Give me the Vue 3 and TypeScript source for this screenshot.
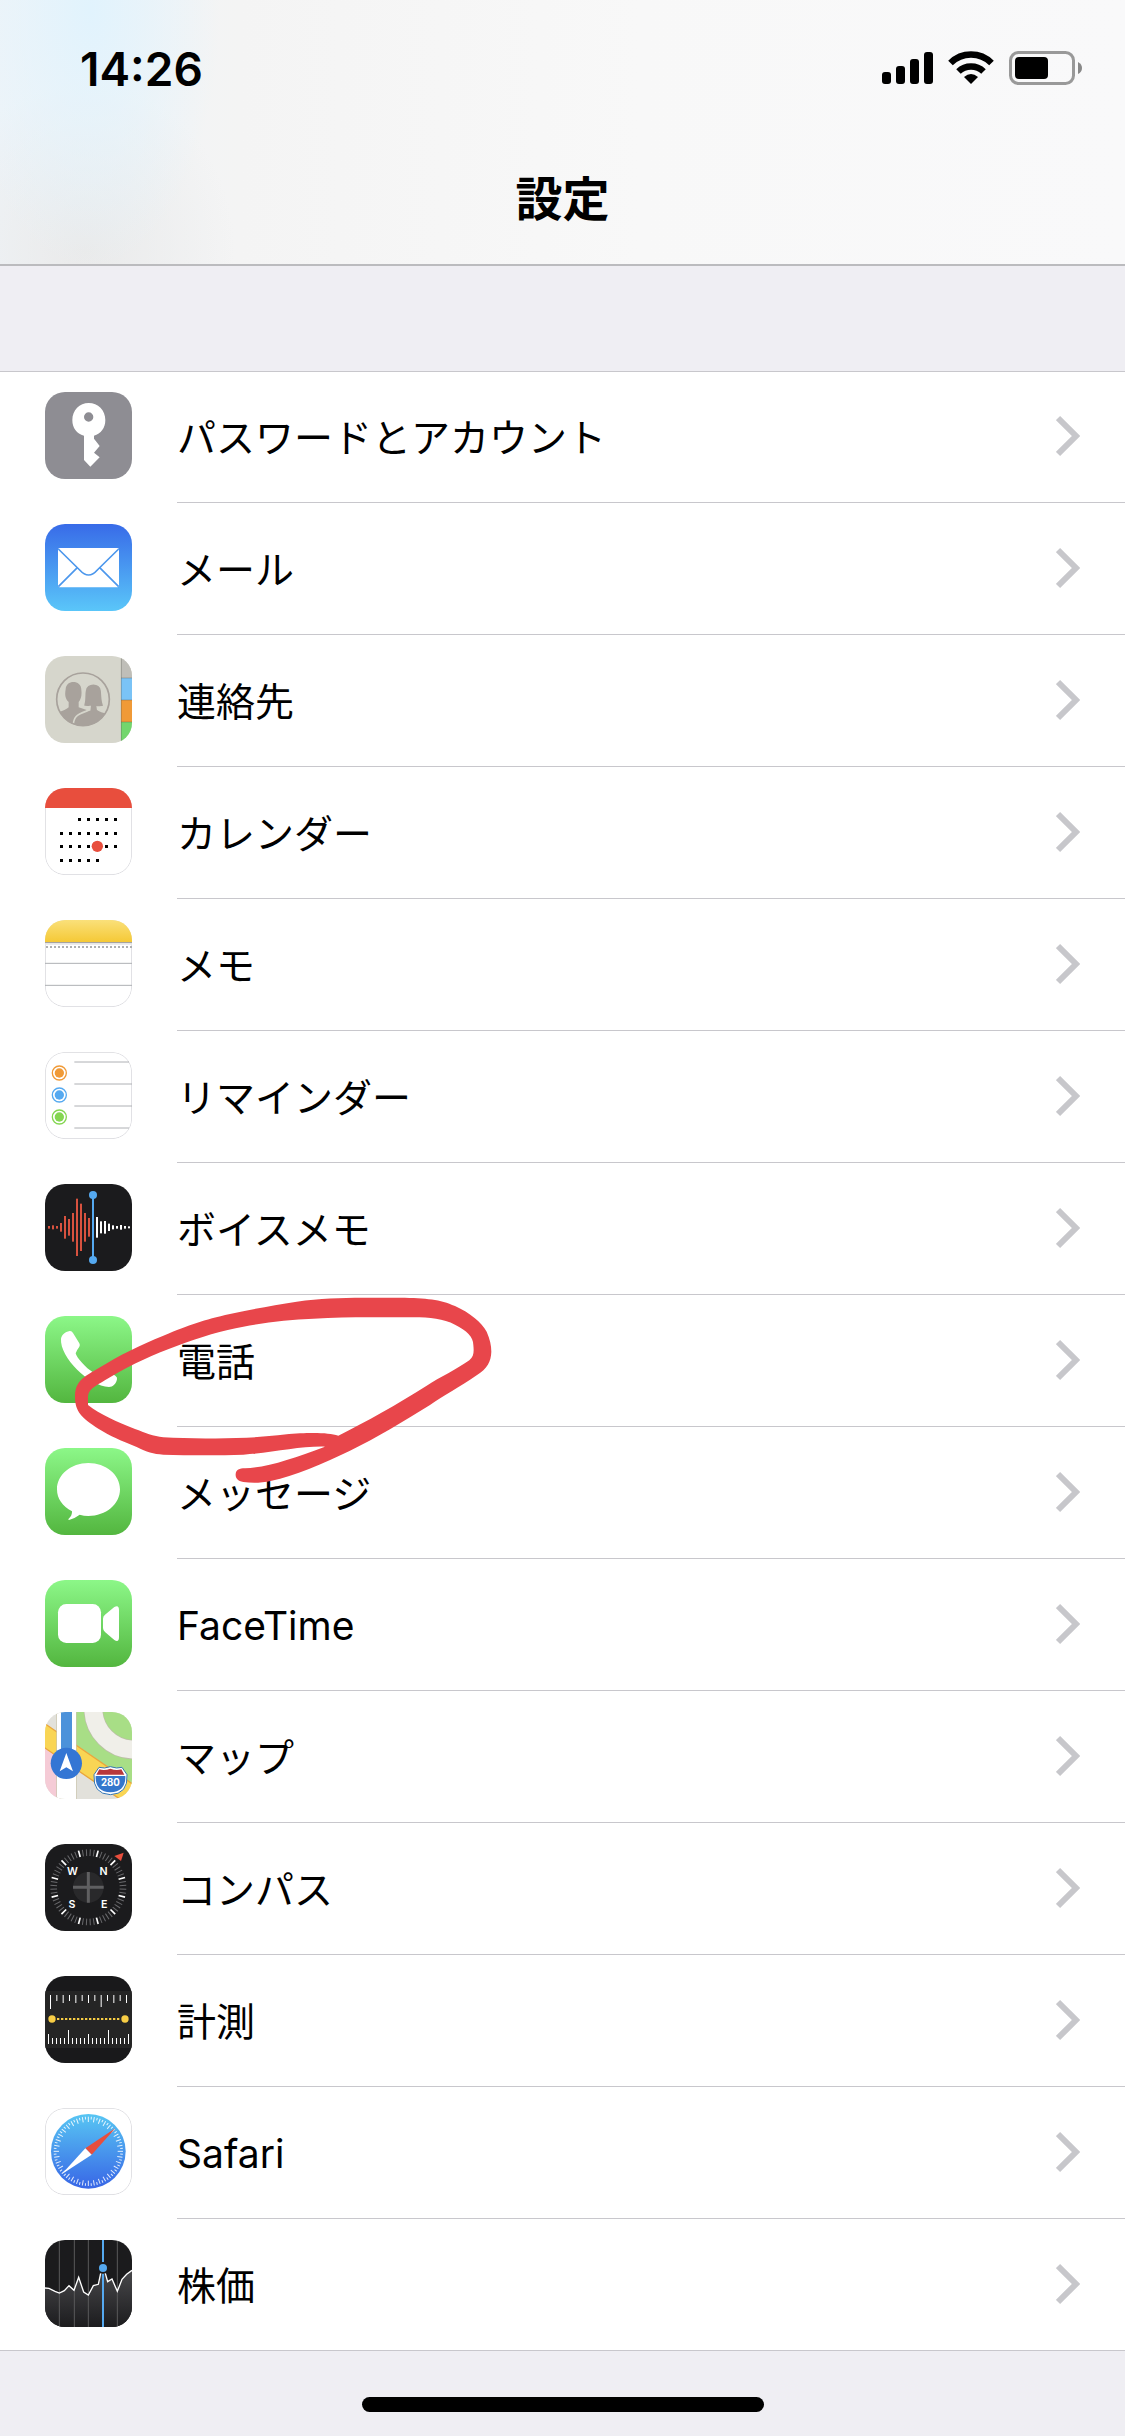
<script setup lang="ts">
interface Item {
  id: string
  label: string
}

interface Bar {
  x: number
  h: number
}

const items: Item[] = [
  { id: 'key', label: 'パスワードとアカウント' },
  { id: 'mail', label: 'メール' },
  { id: 'contacts', label: '連絡先' },
  { id: 'calendar', label: 'カレンダー' },
  { id: 'notes', label: 'メモ' },
  { id: 'reminders', label: 'リマインダー' },
  { id: 'voice', label: 'ボイスメモ' },
  { id: 'phone', label: '電話' },
  { id: 'messages', label: 'メッセージ' },
  { id: 'facetime', label: 'FaceTime' },
  { id: 'maps', label: 'マップ' },
  { id: 'compass', label: 'コンパス' },
  { id: 'measure', label: '計測' },
  { id: 'safari', label: 'Safari' },
  { id: 'stocks', label: '株価' },
]

const calendarRows = [
  { y: 94, from: 2, to: 6 },
  { y: 136, from: 0, to: 6 },
  { y: 175, from: 0, to: 6 },
  { y: 217, from: 0, to: 4 },
]
const calendarDots = calendarRows.flatMap((r) =>
  Array.from({ length: r.to - r.from + 1 }, (_, i) => ({ x: 49 + (r.from + i) * 27, y: r.y })),
)

const reminderDots = [
  { y: 63, color: '#f09a37' },
  { y: 129, color: '#55a9f0' },
  { y: 195, color: '#84d651' },
]

const redWave: Bar[] = [4, 6, 4, 13, 34, 25, 43, 86, 71, 43, 28].map((h, i) => ({ x: 12 + i * 12, h }))
const whiteWave: Bar[] = [31, 18, 19, 11, 6, 4, 7, 4, 3].map((h, i) => ({ x: 156 + i * 12, h }))

const compassTicks = Array.from({ length: 60 }, (_, i) => ({ angle: i * 6 + 15, major: i % 5 === 0 }))

const rulerTop: Bar[] = [42, 18, 24, 18, 24, 18, 24, 18, 36, 18, 24, 18, 24].map((h, i) => ({
  x: 16 + i * 19,
  h,
}))
const rulerBottom: Bar[] = Array.from({ length: 21 }, (_, i) => ({
  x: 10 + i * 12,
  h: i % 10 === 5 ? 42 : i % 5 === 0 ? 30 : 18,
}))

const safariTicks = Array.from({ length: 72 }, (_, i) => ({ angle: i * 5, inner: i % 2 === 0 ? 42 : 34 }))
</script>

<template>
  <div class="screen">
    <header class="top">
      <div class="status">
        <span class="time">14:26</span>
        <svg class="indicators" viewBox="0 0 201 36" aria-hidden="true">
          <rect x="0" y="21" width="9" height="12" rx="3" />
          <rect x="14" y="15" width="9" height="18" rx="3" />
          <rect x="28" y="8" width="9" height="25" rx="3" />
          <rect x="42" y="1" width="9" height="32" rx="3" />
          <path d="M89 33 L82 26 Q89 20 96 26 Z" />
          <path d="M76.500 20.500 A18 18 0 0 1 101.500 20.500" fill="none" stroke="#000" stroke-width="6.500" />
          <path d="M68.500 12 A29 29 0 0 1 109.500 12" fill="none" stroke="#000" stroke-width="6.500" />
          <rect x="128.500" y="1.500" width="63" height="31" rx="8" fill="none" stroke="#999" stroke-width="3" />
          <rect x="133" y="6" width="33" height="22" rx="4" />
          <path d="M196 11 Q200 13 200 17 Q200 21 196 23 Z" fill="#888" />
        </svg>
      </div>
      <h1 class="title">設定</h1>
    </header>

    <main>
      <ul class="list">
        <li v-for="item in items" :key="item.id" class="item">
          <a class="row" href="#">
            <svg class="icon" viewBox="0 0 261 261" aria-hidden="true">
              <template v-if="item.id === 'key'">
                <rect width="261" height="261" fill="#8e8d93" />
                <path
                  fill="#fff"
                  fill-rule="evenodd"
                  d="M131 33 C159 33 181 55 181 84 C181 108 168 125 147 131 V140 L164 162 L147 182 L164 196 L136 224 L117 204 V131 C95 125 82 108 82 84 C82 55 104 33 131 33 Z M131 61 A14 14 0 1 0 131 89 A14 14 0 1 0 131 61 Z"
                />
              </template>

              <template v-else-if="item.id === 'mail'">
                <defs>
                  <linearGradient id="mail-bg" x1="0" y1="0" x2="0" y2="1">
                    <stop offset="0" stop-color="#386be8" />
                    <stop offset="1" stop-color="#5ac6f9" />
                  </linearGradient>
                </defs>
                <rect width="261" height="261" fill="url(#mail-bg)" />
                <rect x="39" y="72" width="183" height="118" rx="5" fill="#fff" />
                <g fill="none" stroke="#4c97ec" stroke-width="5">
                  <path d="M40 75 L104 138 Q131 168 157 138 L221 75" />
                  <path d="M97 131 L40 188 M164 131 L221 188" />
                </g>
              </template>

              <template v-else-if="item.id === 'contacts'">
                <rect width="261" height="261" fill="#d6d6cc" />
                <rect x="228" width="33" height="66" fill="#bfbeb8" />
                <rect x="228" y="66" width="33" height="66" fill="#7ac3f6" />
                <rect x="228" y="132" width="33" height="66" fill="#f09a37" />
                <rect x="228" y="198" width="33" height="63" fill="#73d66d" />
                <path d="M229 0 V261 M228 66 H261 M228 132 H261 M228 198 H261" stroke="#5a5a50" stroke-opacity=".35" stroke-width="3" />
                <defs>
                  <clipPath id="contacts-clip"><circle cx="114" cy="130" r="80" /></clipPath>
                </defs>
                <g clip-path="url(#contacts-clip)" fill="#a8a29c">
                  <path d="M30 172 Q64 162 71 154 V138 C58 126 60 112 62 100 C62 70 110 70 109 102 C111 118 108 130 101 138 V154 L125 162 V220 H30 Z" />
                  <path
                    stroke="#d6d6cc"
                    stroke-width="5"
                    d="M84 225 C82 176 100 174 134 162 L135 152 Q121 154 114 150 C121 134 117 118 120 104 C122 76 168 76 170 104 C172 122 170 136 178 151 Q170 154 157 153 L158 160 Q164 166 200 174 V225 Z"
                  />
                </g>
                <circle cx="114" cy="130" r="79" fill="none" stroke="#a8a29c" stroke-width="5" />
              </template>

              <template v-else-if="item.id === 'calendar'">
                <rect width="261" height="261" fill="#fff" />
                <rect class="edge" x="1" y="1" width="259" height="259" rx="59" />
                <rect width="261" height="60" fill="#e84e3d" />
                <rect v-for="(dot, i) in calendarDots" :key="i" :x="dot.x - 4" :y="dot.y - 4" width="9" height="9" />
                <circle cx="157" cy="175" r="17" fill="#e84e3d" />
              </template>

              <template v-else-if="item.id === 'notes'">
                <defs>
                  <linearGradient id="notes-bg" x1="0" y1="0" x2="0" y2="1">
                    <stop offset="0" stop-color="#fae07a" />
                    <stop offset="1" stop-color="#f5c936" />
                  </linearGradient>
                </defs>
                <rect width="261" height="261" fill="#fff" />
                <rect class="edge" x="1" y="1" width="259" height="259" rx="59" />
                <rect width="261" height="66" fill="url(#notes-bg)" />
                <path d="M0 68 H261" stroke="#a5a3a0" stroke-width="4" />
                <path d="M0 72 H261" stroke="#e6e6e6" stroke-width="4" />
                <path d="M3 81 H261" stroke="#aeb0b2" stroke-width="6" stroke-dasharray="6 6" />
                <path d="M0 130 H261 M0 196 H261" stroke="#aeb0b4" stroke-width="3" />
              </template>

              <template v-else-if="item.id === 'reminders'">
                <rect width="261" height="261" fill="#fff" />
                <rect class="edge" x="1" y="1" width="259" height="259" rx="59" />
                <path d="M88 30 H252 M88 96 H261 M88 162 H261 M88 228 H252" stroke="#aeb0b4" stroke-width="3" />
                <g v-for="dot in reminderDots" :key="dot.y">
                  <circle cx="43" :cy="dot.y" r="21" fill="none" :stroke="dot.color" stroke-width="4" />
                  <circle cx="43" :cy="dot.y" r="14" :fill="dot.color" />
                </g>
              </template>

              <template v-else-if="item.id === 'voice'">
                <rect width="261" height="261" fill="#1b1b1d" />
                <rect v-for="bar in redWave" :key="bar.x" :x="bar.x - 3" :y="130 - bar.h" width="6" :height="bar.h * 2" fill="#d8523f" />
                <rect v-for="bar in whiteWave" :key="bar.x" :x="bar.x - 3" :y="130 - bar.h" width="6" :height="bar.h * 2" fill="#fff" />
                <path d="M144 33 V228" stroke="#55a9f0" stroke-width="6" />
                <circle cx="144" cy="33" r="12" fill="#55a9f0" />
                <circle cx="144" cy="228" r="12" fill="#55a9f0" />
              </template>

              <template v-else-if="item.id === 'phone'">
                <defs>
                  <linearGradient id="green-bg" x1="0" y1="0" x2="0" y2="1">
                    <stop offset="0" stop-color="#8cf788" />
                    <stop offset="1" stop-color="#53b63f" />
                  </linearGradient>
                </defs>
                <rect width="261" height="261" fill="url(#green-bg)" />
                <path
                  fill="#fff"
                  d="M48 68 C50 56 60 48 74 45 Q80 44 84 51 L103 82 Q106 88 103 92 Q94 104 92 112 C94 124 124 158 143 168 Q152 167 164 158 Q170 154 176 157 L211 179 Q218 184 216 190 C213 204 204 213 192 213 C132 209 44 124 48 68 Z"
                />
              </template>

              <template v-else-if="item.id === 'messages'">
                <rect width="261" height="261" fill="url(#green-bg)" />
                <path
                  fill="#fff"
                  d="M130 45 C183 45 225 80 225 124 C225 169 183 204 130 204 Q117 204 104 200 Q88 212 72 216 Q68 215 71 212 Q82 203 81 190 C52 175 36 152 36 124 C36 80 78 45 130 45 Z"
                />
              </template>

              <template v-else-if="item.id === 'facetime'">
                <rect width="261" height="261" fill="url(#green-bg)" />
                <rect x="39" y="72" width="129" height="117" rx="25" fill="#fff" />
                <path fill="#fff" d="M174 116 Q174 109 180 104 L208 81 Q222 73 222 90 V171 Q222 189 208 180 L180 156 Q174 151 174 144 Z" />
              </template>

              <template v-else-if="item.id === 'maps'">
                <rect width="261" height="261" fill="#e2e1db" />
                <path d="M93 0 H261 V215 L93 98 Z" fill="#a8de86" />
                <circle cx="268" cy="-10" r="123" fill="none" stroke="#bcbfa8" stroke-width="58" />
                <circle cx="268" cy="-10" r="123" fill="none" stroke="#f0efe9" stroke-width="54" />
                <path d="M0 104 L36 130 V261 H0 Z" fill="#f5cbd6" />
                <path d="M-6 31 L267 219 V290 L-6 104 Z" fill="#f9d554" stroke="#eaa63c" stroke-width="4" />
                <rect x="34" width="61" height="261" fill="#c9c5ae" />
                <rect x="36" width="57" height="261" fill="#fff" />
                <rect x="48" width="33" height="154" fill="#4c92da" />
                <circle cx="64" cy="154" r="47" fill="#3476d4" />
                <path d="M64 123 L84 178 L64 166 L44 178 Z" fill="#fff" />
                <path
                  d="M162 166 Q178 171 196 164 Q216 171 231 166 L246 188 Q250 246 196 248 Q143 246 147 188 Z"
                  fill="#fff"
                  stroke="#3476b4"
                  stroke-width="3"
                />
                <path d="M163 172 Q179 177 196 170 Q214 177 229 172 L238 188 H154 Z" fill="#b8383c" />
                <path d="M152 192 H241 Q243 239 196 241 Q150 239 152 192 Z" fill="#3476cc" />
                <text x="196" y="221" class="shield" text-anchor="middle">280</text>
              </template>

              <template v-else-if="item.id === 'compass'">
                <rect width="261" height="261" fill="#1b1b1d" />
                <path
                  v-for="tick in compassTicks"
                  :key="tick.angle"
                  d="M130 16 V36"
                  :transform="`rotate(${tick.angle} 130 130)`"
                  :stroke="tick.major ? '#fff' : '#6a6a6d'"
                  :stroke-width="tick.major ? 5 : 3"
                />
                <circle cx="130" cy="130" r="46" fill="#29292b" />
                <path d="M130 84 V176 M84 130 H176" stroke="#5f5f61" stroke-width="9" />
                <path d="M208 36 L236 26 L228 51 Z" fill="#e84e3d" />
                <g class="points" text-anchor="middle">
                  <text x="82" y="93">W</text>
                  <text x="176" y="93">N</text>
                  <text x="81" y="192">S</text>
                  <text x="178" y="192">E</text>
                </g>
              </template>

              <template v-else-if="item.id === 'measure'">
                <rect width="261" height="261" fill="#19191b" />
                <rect y="45" width="261" height="171" fill="#252525" />
                <rect v-for="bar in rulerTop" :key="bar.x" :x="bar.x - 1" y="57" width="3" :height="bar.h" fill="#fff" />
                <rect v-for="bar in rulerBottom" :key="bar.x" :x="bar.x - 1" :y="204 - bar.h" width="3" :height="bar.h" fill="#fff" />
                <path d="M36 129 H226" stroke="#f7cd45" stroke-width="6" stroke-dasharray="7 5" />
                <circle cx="21" cy="129" r="11" fill="#f7cd45" />
                <circle cx="240" cy="129" r="11" fill="#f7cd45" />
              </template>

              <template v-else-if="item.id === 'safari'">
                <defs>
                  <linearGradient id="safari-bg" x1="0" y1="0" x2="0" y2="1">
                    <stop offset="0" stop-color="#58c6f3" />
                    <stop offset="1" stop-color="#3866e6" />
                  </linearGradient>
                </defs>
                <rect width="261" height="261" fill="#fff" />
                <rect class="edge" x="1" y="1" width="259" height="259" rx="59" />
                <circle cx="130" cy="130" r="112" fill="url(#safari-bg)" />
                <path
                  v-for="tick in safariTicks"
                  :key="tick.angle"
                  :d="`M130 26 V${tick.inner}`"
                  :transform="`rotate(${tick.angle} 130 130)`"
                  stroke="#fff"
                  stroke-opacity=".85"
                  stroke-width="3"
                />
                <path d="M211 61 L140 140 L121 121 Z" fill="#e84e3d" />
                <path d="M50 199 L121 121 L140 140 Z" fill="#fff" />
              </template>

              <template v-else>
                <defs>
                  <linearGradient id="stocks-area" x1="0" y1="0" x2="0" y2="1">
                    <stop offset="0" stop-color="#48484b" />
                    <stop offset="1" stop-color="#1c1c1e" />
                  </linearGradient>
                </defs>
                <rect width="261" height="261" fill="#1b1b1d" />
                <path
                  fill="url(#stocks-area)"
                  d="M0 144 L12 145 L30 154 L43 159 L58 152 L72 137 L87 151 L101 112 L116 156 L130 165 L145 137 L160 133 L167 100 H181 L188 125 L201 117 L217 154 L231 118 L245 103 L261 91 V261 H0 Z"
                />
                <path d="M43 0 V261 M88 0 V261 M130 0 V261 M217 0 V261" stroke="#59595b" stroke-width="3" />
                <path
                  fill="none"
                  stroke="#fff"
                  stroke-width="4"
                  d="M0 144 L12 145 L30 154 L43 159 L58 152 L72 137 L87 151 L101 112 L116 156 L130 165 L145 137 L160 133 L167 100 M181 100 L188 125 L201 117 L217 154 L231 118 L245 103 L261 91"
                />
                <path d="M174 0 V66 M174 102 V261" stroke="#55a9f0" stroke-width="6" />
                <circle cx="174" cy="84" r="12" fill="#55a9f0" />
              </template>
            </svg>
            <span class="body">
              <span class="label">{{ item.label }}</span>
              <svg class="chevron" viewBox="0 0 24 42" aria-hidden="true">
                <path d="M2 3 L20 21 L2 39" fill="none" stroke="#c7c7cb" stroke-width="6" />
              </svg>
            </span>
          </a>
          <svg v-if="item.id === 'phone'" class="marker" viewBox="0 15 1440 600" aria-hidden="true">
            <path
              fill="#e8464b"
              fill-rule="evenodd"
              d="M135 320 C135 275 160 262 200 238 C270 194 330 166 400 137 C480 104 520 90 600 72 C670 57 730 46 800 35 C870 25 930 23 1000 23 H1110 C1190 24 1230 28 1275 48 C1320 68 1355 98 1370 125 C1380 148 1384 165 1384 185 C1383 215 1372 235 1340 256 C1290 290 1240 318 1200 345 C1120 395 1040 443 960 482 C880 521 790 559 725 572 C690 580 665 579 640 576 C622 573 616 564 617 552 C618 540 628 535 645 535 C710 533 790 505 885 470 C810 468 730 488 640 494 C560 497 470 496 400 494 C370 492 350 486 320 471 C270 450 240 438 205 416 C155 383 135 365 135 320 Z M174 318 C176 295 205 284 240 262 C310 220 370 194 440 168 C510 141 580 120 640 110 C710 97 780 88 850 86 C930 81 1010 82 1080 82 H1150 C1200 82 1240 86 1275 104 C1310 122 1330 140 1330 165 C1332 185 1332 200 1318 211 C1280 238 1230 262 1190 287 C1100 344 1010 394 925 437 C900 430 870 428 810 430 C760 433 710 441 650 443 C560 446 470 446 400 442 C370 439 345 428 315 417 C260 396 210 373 174 345 Z"
            />
          </svg>
        </li>
      </ul>
    </main>

    <footer class="bottom">
      <div class="home"></div>
    </footer>
  </div>
</template>

<style>
body {
  margin: 0;
  background: #efeef3;
}
</style>

<style scoped>
.screen {
  display: flex;
  flex-direction: column;
  min-height: 100vh;
  background: #efeef3;
  color: #000;
  font-family: Inter, 'Noto Sans CJK JP', sans-serif;
}

.top {
  height: 264px;
  border-bottom: 2px solid #bbbbbe;
  box-sizing: content-box;
  background:
    radial-gradient(ellipse 130px 260px at 90px 10px, #e1f3fd, transparent),
    radial-gradient(ellipse 150px 170px at 85px 250px, #eaeaea, transparent),
    linear-gradient(90deg, #eff4f8, #f4f4f4 240px, #f8f8f8 640px, #f9f9fa);
}

.status {
  display: flex;
  justify-content: space-between;
  align-items: center;
  height: 138px;
  padding: 0 42px 0 80px;
}

.time {
  font-size: 46px;
  font-weight: 600;
  line-height: 54px;
}

.indicators {
  width: 201px;
  height: 36px;
}

.title {
  margin: 0;
  padding-top: 25px;
  font-size: 47px;
  font-weight: 700;
  line-height: 72px;
  text-align: center;
}

.list {
  margin: 105px 0 0;
  padding: 0;
  list-style: none;
  background: #fff;
  box-shadow: inset 0 1px #c8c7cc;
}

.item {
  position: relative;
}

.row {
  display: flex;
  align-items: center;
  gap: 45px;
  height: 132px;
  padding-left: 45px;
  color: inherit;
  text-decoration: none;
}

.item:last-child {
  box-shadow: inset 0 -1px #c8c7cc;
}

.icon {
  flex: none;
  width: 87px;
  height: 87px;
  margin-bottom: 3px;
  border-radius: 20px;
}

.edge {
  fill: none;
  stroke: #dcdce0;
  stroke-width: 3px;
}

.shield {
  fill: #fff;
  font-size: 29px;
  font-weight: 700;
}

.points {
  fill: #fff;
  font-size: 32px;
  font-weight: 600;
}

.body {
  box-sizing: border-box;
  display: flex;
  flex: 1;
  align-items: center;
  justify-content: space-between;
  height: 100%;
  padding-right: 45px;
  border-bottom: 1px solid #c8c7cc;
}

.label {
  padding-top: 3px;
  font-size: 39px;
  line-height: 60px;
}

.chevron {
  width: 24px;
  height: 42px;
  margin-bottom: 2px;
}

.marker {
  position: absolute;
  z-index: 1;
  top: 0;
  left: 30px;
  width: 480px;
  height: 200px;
  pointer-events: none;
}

.bottom {
  display: flex;
  justify-content: center;
  padding: 46px 0 24px;
}

.home {
  width: 402px;
  height: 15px;
  border-radius: 8px;
  background: #000;
}
</style>
